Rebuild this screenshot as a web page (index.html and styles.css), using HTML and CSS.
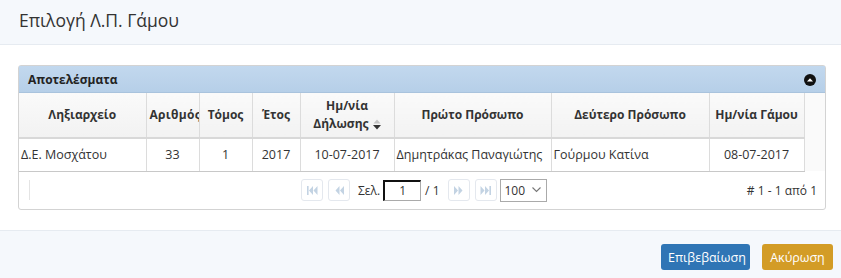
FILE: index.html
```html
<!DOCTYPE html>
<html lang="el">
<head>
    <meta charset="UTF-8">
    <title>Επιλογή Λ.Π. Γάμου</title>
    <link rel="stylesheet" href="styles.css">
</head>
<body>
    <div class="modal">
        <div class="modal-header">
            <h1>Επιλογή Λ.Π. Γάμου</h1>
        </div>

        <div class="modal-body">
            <div class="grid">
                <div class="grid-caption">
                    <span>Αποτελέσματα</span>
                    <span class="collapse-btn">
                        <svg width="12" height="12" viewBox="0 0 12 12"><circle cx="6" cy="6" r="6" fill="#111"/><path d="M3 7.5 L6 4.2 L9 7.5 Z" fill="#fff"/></svg>
                    </span>
                </div>

                <table class="grid-table">
                    <colgroup>
                        <col style="width:127px">
                        <col style="width:53px">
                        <col style="width:53px">
                        <col style="width:48px">
                        <col style="width:94px">
                        <col style="width:157px">
                        <col style="width:158px">
                        <col style="width:95px">
                        <col>
                    </colgroup>
                    <thead>
                        <tr>
                            <th>Ληξιαρχείο</th>
                            <th class="clip">Αριθμός</th>
                            <th>Τόμος</th>
                            <th>Έτος</th>
                            <th>Ημ/νία<br>Δήλωσης <span class="sort"><svg width="8" height="11" viewBox="0 0 8 11"><path d="M0.5 4.5 L4 0.5 L7.5 4.5 Z" fill="#c4c4c4"/><path d="M0 6 L4 10.5 L8 6 Z" fill="#333"/></svg></span></th>
                            <th>Πρώτο Πρόσωπο</th>
                            <th>Δεύτερο Πρόσωπο</th>
                            <th>Ημ/νία Γάμου</th>
                            <th class="filler"></th>
                        </tr>
                    </thead>
                    <tbody>
                        <tr>
                            <td class="left">Δ.Ε. Μοσχάτου</td>
                            <td>33</td>
                            <td>1</td>
                            <td>2017</td>
                            <td>10-07-2017</td>
                            <td class="left">Δημητράκας Παναγιώτης</td>
                            <td class="left">Γούρμου Κατίνα</td>
                            <td>08-07-2017</td>
                            <td class="filler"></td>
                        </tr>
                    </tbody>
                </table>

                <div class="pager">
                    <div class="pager-left"><span class="sep"></span></div>
                    <div class="pager-center">
                        <span class="pg-btn">
                            <svg width="11" height="9" viewBox="0 0 11 9"><rect x="0" y="0" width="1.6" height="9" fill="#c3d3e3"/><path d="M6 0 L2 4.5 L6 9 Z M10.5 0 L6.5 4.5 L10.5 9 Z" fill="#c3d3e3"/></svg>
                        </span>
                        <span class="pg-btn">
                            <svg width="9" height="9" viewBox="0 0 9 9"><path d="M4.5 0 L0.5 4.5 L4.5 9 Z M9 0 L5 4.5 L9 9 Z" fill="#c3d3e3"/></svg>
                        </span>
                        <span class="pg-label">Σελ.</span>
                        <input class="pg-input" type="text" value="1">
                        <span class="pg-total">/ 1</span>
                        <span class="pg-btn">
                            <svg width="9" height="9" viewBox="0 0 9 9"><path d="M0 0 L4 4.5 L0 9 Z M4.5 0 L8.5 4.5 L4.5 9 Z" fill="#c3d3e3"/></svg>
                        </span>
                        <span class="pg-btn">
                            <svg width="11" height="9" viewBox="0 0 11 9"><path d="M0.5 0 L4.5 4.5 L0.5 9 Z M5 0 L9 4.5 L5 9 Z" fill="#c3d3e3"/><rect x="9.4" y="0" width="1.6" height="9" fill="#c3d3e3"/></svg>
                        </span>
                        <span class="pg-select">
                            100
                            <svg width="9" height="6" viewBox="0 0 9 6"><path d="M0.5 0.5 L4.5 4.5 L8.5 0.5" fill="none" stroke="#777" stroke-width="1.1"/></svg>
                        </span>
                    </div>
                    <div class="pager-right"># 1 - 1 από 1</div>
                </div>
            </div>
        </div>

        <div class="modal-footer">
            <button class="btn btn-primary">Επιβεβαίωση</button>
            <button class="btn btn-warning">Ακύρωση</button>
        </div>
    </div>
</body>
</html>
```

FILE: styles.css
```css
* {
    margin: 0;
    padding: 0;
    box-sizing: border-box;
}

body {
    font-family: 'Open Sans', 'Noto Sans', sans-serif;
    background: #ffffff;
    color: #333;
    width: 841px;
    height: 278px;
    overflow: hidden;
}

.modal {
    display: flex;
    flex-direction: column;
    height: 278px;
}

.modal-header {
    height: 45px;
    background: #f5f8fc;
    border-bottom: 1px solid #e6ebf1;
    padding: 8px 19px 0;
}

.modal-header h1 {
    font-size: 17.5px;
    font-weight: 400;
    color: #333;
}

.modal-body {
    height: 185px;
    padding: 20px 15px 0 18px;
}

.grid {
    width: 808px;
    border: 1px solid #d3d3d3;
    border-radius: 3px;
    background: #fff;
}

.grid-caption {
    height: 27px;
    background: linear-gradient(#c2d8ee, #b6cfe8);
    border-bottom: 1px solid #a9c3dd;
    display: flex;
    justify-content: space-between;
    align-items: center;
    padding: 0 9px 0 9px;
    font-size: 12px;
    font-weight: 700;
    color: #222;
}

.collapse-btn {
    display: flex;
    margin-top: 1px;
}

.grid-table {
    border-collapse: collapse;
    table-layout: fixed;
    width: 806px;
    font-size: 12.5px;
}

.grid-table th {
    height: 45px;
    background: linear-gradient(#fafafa, #f2f2f2);
    border-right: 1px solid #dcdcdc;
    border-bottom: 2px solid #d8d8d8;
    font-size: 12px;
    font-weight: 700;
    color: #333;
    text-align: center;
    line-height: 18px;
    white-space: nowrap;
}

.grid-table th.clip {
    overflow: hidden;
    text-overflow: clip;
    text-align: left;
    padding-left: 3px;
    letter-spacing: 0.3px;
}

.grid-table th.filler,
.grid-table td.filler {
    background: #fafafa;
    border-right: none;
    border-bottom: none;
}

.sort {
    display: inline-block;
    vertical-align: middle;
    margin-left: 1px;
}

.sort svg {
    display: block;
}

.grid-table td {
    height: 33px;
    border-right: 1px solid #dcdcdc;
    border-bottom: 1px solid #c8c8c8;
    text-align: center;
    color: #333;
    white-space: nowrap;
    overflow: hidden;
}

.grid-table td.left {
    text-align: left;
    padding-left: 2px;
}

.pager {
    height: 37px;
    display: flex;
    align-items: center;
    font-size: 12px;
    color: #333;
}

.pager-left {
    width: 282px;
    padding-left: 10px;
    display: flex;
}

.sep {
    width: 1px;
    height: 20px;
    background: #e4e4e4;
}

.pager-center {
    display: flex;
    align-items: center;
}

.pg-btn {
    width: 22px;
    height: 22px;
    border: 1px solid #e4e8ee;
    border-radius: 3px;
    display: flex;
    align-items: center;
    justify-content: center;
    margin-right: 5px;
}

.pg-label {
    margin: 0 3px 0 3px;
}

.pg-input {
    width: 38px;
    height: 21px;
    border: 1px solid #aaa;
    border-top: 2px solid #111;
    border-left: 2px solid #111;
    font-family: inherit;
    font-size: 12px;
    text-align: center;
    color: #333;
    padding: 0;
}

.pg-total {
    margin: 0 8px 0 4px;
}

.pg-select {
    width: 47px;
    height: 23px;
    border: 1px solid #aaa;
    display: flex;
    align-items: center;
    justify-content: space-between;
    padding: 0 5px 0 4px;
    margin-left: -2px;
}

.pager-right {
    margin-left: auto;
    padding-right: 8px;
}

.modal-footer {
    flex: 1;
    background: #f5f8fc;
    border-top: 1px solid #e6ebf1;
    display: flex;
    justify-content: flex-end;
    align-items: flex-start;
    gap: 12px;
    padding: 13px 8px 0 0;
}

.btn {
    height: 26px;
    border: none;
    border-radius: 3px;
    font-family: inherit;
    font-size: 12.5px;
    color: #fff;
    padding: 0 7px;
}

.btn-primary {
    background: #2f75b5;
    width: 89px;
}

.btn-warning {
    background: #d39c26;
    width: 71px;
}
```
